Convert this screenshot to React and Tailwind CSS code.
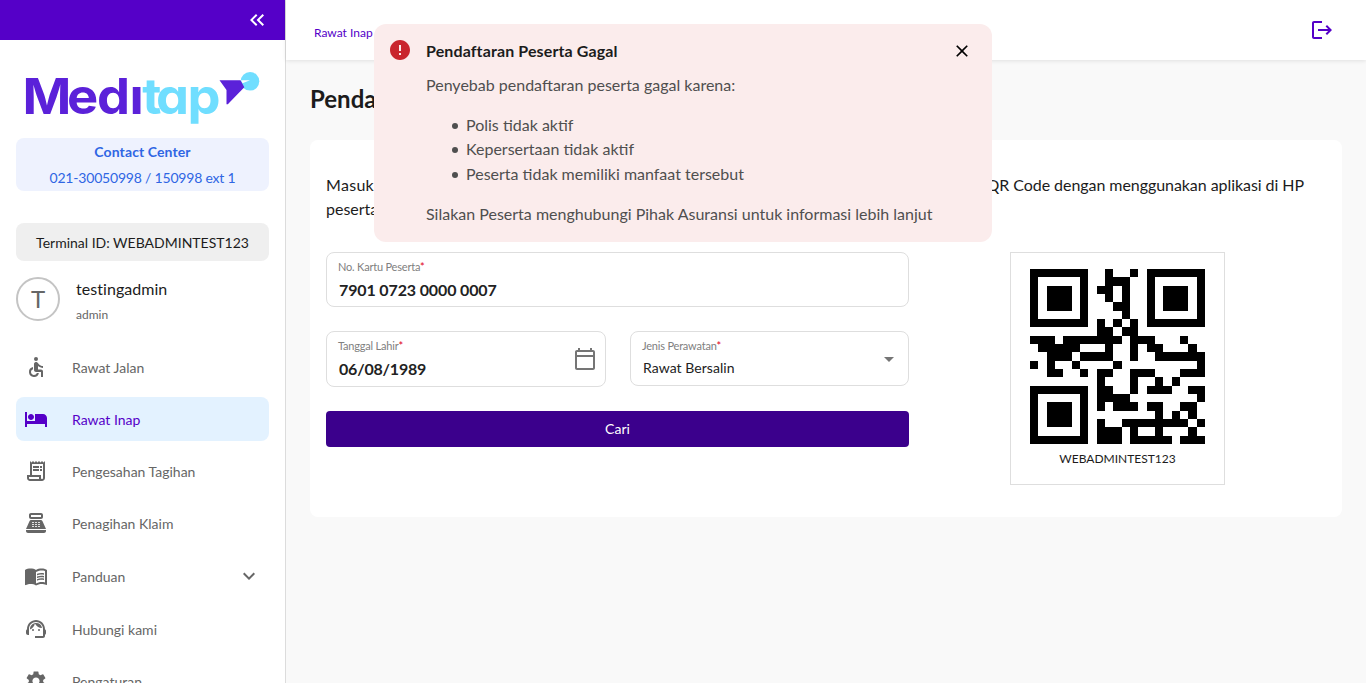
import {
  MdAccessible,
  MdHotel,
  MdOutlineReceiptLong,
  MdPointOfSale,
  MdMenuBook,
  MdSupportAgent,
  MdSettings,
  MdKeyboardArrowDown,
  MdKeyboardDoubleArrowLeft,
  MdOutlineCalendarToday,
  MdError,
  MdClose,
  MdArrowDropDown,
} from "react-icons/md";

const menu = [
  { label: "Rawat Jalan", icon: MdAccessible, box: "h-11 text-[#666]" },
  { label: "Rawat Inap", icon: MdHotel, box: "h-11 bg-[#e3f2ff] text-[#5500c8]" },
  { label: "Pengesahan Tagihan", icon: MdOutlineReceiptLong, box: "h-11 text-[#666]" },
  { label: "Penagihan Klaim", icon: MdPointOfSale, box: "h-11 text-[#666]" },
  { label: "Panduan", icon: MdMenuBook, box: "h-[46px] text-[#666]", expandable: true },
  { label: "Hubungi kami", icon: MdSupportAgent, box: "h-11 text-[#666]" },
  { label: "Pengaturan", icon: MdSettings, box: "h-11 text-[#666]" },
];

const reasons = [
  "Polis tidak aktif",
  "Kepersertaan tidak aktif",
  "Peserta tidak memiliki manfaat tersebut",
];

const qrRows = [
  "#######..#..#.#######",
  "#.....#..###..#.....#",
  "#.###.#.##.#..#.###.#",
  "#.###.#..#.#..#.###.#",
  "#.###.#...##..#.###.#",
  "#.....#....#..#.....#",
  "#######.#.#.#.#######",
  "........##.##........",
  "###.#######.###...#..",
  ".#####...#..#.##...#.",
  "..###.####..#..######",
  "#.#..#....#.........#",
  "..##..#.##..###...###",
  "........#...#..#.#...",
  "#######.##..#.###..##",
  "#.....#.####........#",
  "#.###.#.#.###.##..##.",
  "#.###.#........#.#.#.",
  "#.###.#.#..########.#",
  "#.....#.###.#..#...#.",
  "#######.###.#####.###",
];

function QrCode() {
  const d = qrRows
    .map((row, y) => [...row].map((c, x) => (c === "#" ? `M${x} ${y}h1v1h-1z` : "")).join(""))
    .join("");
  return (
    <svg viewBox="0 0 21 21" className="size-[175px]" shapeRendering="crispEdges">
      <path d={d} fill="#000" />
    </svg>
  );
}

function Logo() {
  return (
    <svg
      viewBox="0 0 237 56"
      className="h-14 w-[237px] overflow-visible [font-feature-settings:'cv11']"
      fontFamily="Inter, sans-serif"
      fontWeight="700"
      fontSize="49.5"
    >
      <g transform="scale(1.06 1)">
        <text y="44" x="-1.500 40.600 68.800 99.600" fill="#5b21d9">
          Medı
        </text>
        <text y="44" x="111.500 124.600 154.200" fill="#70deff">
          tap
        </text>
      </g>
      <circle cx="226" cy="11.300" r="9.300" fill="#70deff" />
      <path d="M195.500 10.300h21l3.800 7-16.500 17h-1.300V20z" fill="#5b21d9" />
      <path d="M217 10.300h9l-7.500 3z" fill="#fff" />
    </svg>
  );
}

function FieldLabel({ children }) {
  return (
    <div className="text-[11px] leading-4 tracking-[-0.2px] text-[#808080]">
      {children}
      <span className="text-[#e00020]">*</span>
    </div>
  );
}

function Sidebar() {
  return (
    <aside className="flex w-[286px] shrink-0 flex-col overflow-hidden border-r border-[#dcdcdc] bg-white">
      <div className="flex h-10 shrink-0 items-center justify-end bg-[#5500c8] pr-4 text-white">
        <MdKeyboardDoubleArrowLeft className="size-6" />
      </div>
      <div className="flex flex-col px-4 pt-[30px]">
        <div className="flex h-[68px] pl-2">
          <Logo />
        </div>
        <div className="flex h-[53px] flex-col items-center justify-center rounded-lg bg-[#eef2fe] text-sm leading-[26px] text-[#2f66e4]">
          <div className="font-bold tracking-[0.1px]">Contact Center</div>
          <div className="tracking-[-0.2px]">021-30050998 / 150998 ext 1</div>
        </div>
        <div className="mt-8 flex h-[38px] items-center justify-center rounded-lg bg-[#efefef] pt-px text-sm text-[#1c1c1c]">
          Terminal ID: WEBADMINTEST123
        </div>
        <div className="mt-4 flex h-11 items-center gap-4">
          <div className="flex size-11 items-center justify-center rounded-full border-2 border-[#c4c4c4] text-2xl text-[#666]">
            T
          </div>
          <div className="flex flex-col pt-0.5">
            <div className="text-base leading-6 tracking-[0.05px] text-[#1c1c1c]">testingadmin</div>
            <div className="mt-[5px] text-xs leading-[18px] text-[#666]">admin</div>
          </div>
        </div>
        <nav className="mt-6 flex flex-col gap-2">
          {menu.map(({ label, icon: Icon, box, expandable }) => (
            <div key={label} className={`flex shrink-0 items-center rounded-lg px-2 ${box}`}>
              <Icon className="size-6 shrink-0" />
              <span className="grow pl-6 pt-0.5 text-sm">{label}</span>
              {expandable && <MdKeyboardArrowDown className="size-6" />}
            </div>
          ))}
        </nav>
      </div>
    </aside>
  );
}

function Toast() {
  return (
    <div className="absolute left-[374px] top-6 flex h-[218px] w-[618px] gap-3.5 rounded-xl bg-[#fbecec] px-3.5 pt-3.5">
      <MdError className="size-6 shrink-0 text-[#c9252d]" />
      <div className="grow text-base leading-[24.5px] text-[#4f4f4f]">
        <div className="pt-px font-bold tracking-[0.12px] text-[#1c1c1c]">Pendaftaran Peserta Gagal</div>
        <p className="mt-[9.500px]">Penyebab pendaftaran peserta gagal karena:</p>
        <ul className="mt-[15px] pl-[26px]">
          {reasons.map((reason) => (
            <li key={reason} className="flex items-center gap-2">
              <span className="mt-0.5 size-1.5 rounded-full bg-[#4f4f4f]" />
              {reason}
            </li>
          ))}
        </ul>
        <p className="mt-4">Silakan Peserta menghubungi Pihak Asuransi untuk informasi lebih lanjut</p>
      </div>
      <MdClose className="mr-1.5 mt-[3px] size-5 shrink-0 text-black" />
    </div>
  );
}

export default function App() {
  return (
    <div className="relative flex h-[683px] w-[1366px] overflow-hidden bg-[#f9f9f9] font-['Lato',sans-serif] text-[#1c1c1c]">
      <Sidebar />
      <div className="flex grow flex-col">
        <header className="flex h-[60px] shrink-0 items-center justify-between bg-white pl-7 pr-8 text-[#5500c8] shadow-[0_1px_4px_rgba(0,0,0,0.1)]">
          <span className="pt-1.5 text-xs">Rawat Inap</span>
          <svg viewBox="0 0 24 24" className="size-6" fill="currentColor">
            <path d="M17 7l-1.410 1.410L18.170 11H8v2h10.170l-2.580 2.580L17 17l5-5zM4 5h8V3H4c-1.100 0-2 .9-2 2v14c0 1.100.9 2 2 2h8v-2H4V5z" />
          </svg>
        </header>
        <main className="flex flex-col px-6 pt-6">
          <h1 className="h-14 text-2xl font-bold leading-[30px]">Pendaftaran Peserta</h1>
          <section className="flex h-[377px] flex-col rounded-lg bg-white px-4 pt-[33px]">
            <p className="flex flex-col text-base leading-6">
              <span className="flex w-[978px] justify-between whitespace-nowrap">
                <span className="tracking-[0.3px]">Masukkan nomor kartu dan tanggal lahir peserta atau pindai</span>
                <span className="tracking-[-0.06px]">QR Code dengan menggunakan aplikasi di HP</span>
              </span>
              <span>peserta</span>
            </p>
            <div className="mt-[31px] flex">
              <div className="flex w-[583px] flex-col">
                <div className="h-[55px] rounded-lg border border-[#dedede] px-[11px] pt-1.5">
                  <FieldLabel>No. Kartu Peserta</FieldLabel>
                  <div className="pl-px pt-[3px] text-base font-bold leading-6 tracking-[-0.13px] text-[#222]">
                    7901 0723 0000 0007
                  </div>
                </div>
                <div className="mt-6 flex items-start gap-6">
                  <div className="flex h-14 w-[280px] justify-between rounded-lg border border-[#dedede] pl-[11px] pr-2 pt-1.5">
                    <div>
                      <FieldLabel>Tanggal Lahir</FieldLabel>
                      <div className="pl-px pt-[3px] text-base font-bold leading-6 tracking-[-0.2px] text-[#222]">
                        06/08/1989
                      </div>
                    </div>
                    <MdOutlineCalendarToday className="mt-[9px] size-6 text-[#757575]" />
                  </div>
                  <div className="flex h-[55px] w-[279px] justify-between rounded-lg border border-[#dedede] pl-[11px] pr-[7px] pt-1.5">
                    <div>
                      <FieldLabel>Jenis Perawatan</FieldLabel>
                      <div className="pl-px pt-0.5 text-sm leading-6 tracking-[0.05px] text-[#222]">Rawat Bersalin</div>
                    </div>
                    <MdArrowDropDown className="mt-[9px] size-6 text-[#757575]" />
                  </div>
                </div>
                <button className="mt-6 h-9 rounded bg-[#3b008c] text-sm text-white">Cari</button>
              </div>
              <div className="ml-[101px] flex h-[233px] w-[215px] flex-col items-center border border-[#dedede] pt-4">
                <QrCode />
                <div className="mt-1.5 text-xs leading-[18px]">WEBADMINTEST123</div>
              </div>
            </div>
          </section>
        </main>
      </div>
      <Toast />
    </div>
  );
}
